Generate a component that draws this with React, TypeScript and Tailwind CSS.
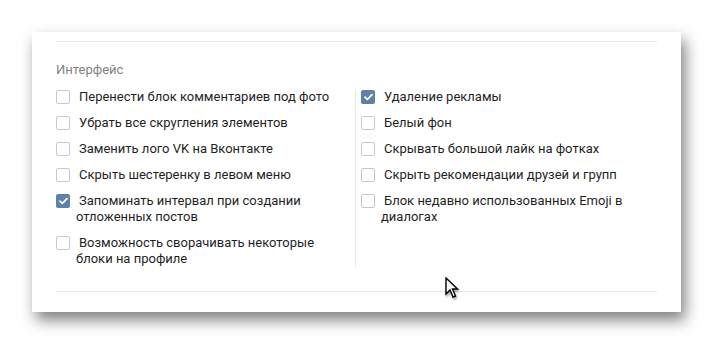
import React from 'react';

type Option = { label: string; checked?: boolean };

const leftOptions: Option[] = [
  { label: 'Перенести блок комментариев под фото' },
  { label: 'Убрать все скругления элементов' },
  { label: 'Заменить лого VK на Вконтакте' },
  { label: 'Скрыть шестеренку в левом меню' },
  { label: 'Запоминать интервал при создании отложенных постов', checked: true },
  { label: 'Возможность сворачивать некоторые блоки на профиле' },
];

const rightOptions: Option[] = [
  { label: 'Удаление рекламы', checked: true },
  { label: 'Белый фон' },
  { label: 'Скрывать большой лайк на фотках' },
  { label: 'Скрыть рекомендации друзей и групп' },
  { label: 'Блок недавно использованных Emoji в диалогах' },
];

const CheckRow: React.FC<{ option: Option }> = ({ option }) => (
  <label className="relative block pl-[20px] indent-[3px] text-[13px] leading-[16px] text-[#1f1f1f]">
    {option.checked ? (
      <span className="absolute left-0 top-[1px] flex h-[14px] w-[14px] items-center justify-center rounded-[2px] bg-[#5e81a8]">
        <svg width="9" height="8" viewBox="0 0 9 8" fill="none">
          <path d="M1 4.2 L3.4 6.4 L8 1.6" stroke="white" strokeWidth="1.8" strokeLinecap="round" strokeLinejoin="round" />
        </svg>
      </span>
    ) : (
      <span className="absolute left-0 top-[1px] h-[14px] w-[14px] rounded-[2px] border border-[#c5c9cf] bg-white" />
    )}
    {option.label}
  </label>
);

const App: React.FC = () => {
  return (
    <div className="relative min-h-[345px] bg-white pl-[32px] pt-[32px]" style={{ fontFamily: 'Roboto, "Noto Sans", sans-serif' }}>
      {/* Settings card */}
      <div className="h-[280px] w-[649px] bg-white px-[24px] pt-[9px] shadow-[4px_8px_14px_rgba(0,0,0,0.5)]">
        <div className="h-px bg-[#e7e8ec]" />
        <div className="mt-[20px] text-[13px] leading-[16px] text-[#828282]">Интерфейс</div>

        <div className="mt-[11px] flex">
          <div className="flex w-[300px] flex-col gap-[10px] border-r border-[#e7e8ec] pr-[8px]">
            {leftOptions.map(o => (
              <CheckRow key={o.label} option={o} />
            ))}
          </div>
          <div className="flex flex-1 flex-col gap-[10px] pl-[5px]">
            {rightOptions.map(o => (
              <CheckRow key={o.label} option={o} />
            ))}
          </div>
        </div>

        <div className="mt-[24px] h-px bg-[#e7e8ec]" />
      </div>

      {/* Mouse cursor */}
      <svg className="absolute left-[445px] top-[277px] drop-shadow-[1px_2px_1px_rgba(0,0,0,0.35)]" width="14" height="22" viewBox="0 0 14 22">
        <path d="M1 1 L1 17 L5 13 L8 20 L10.5 19 L7.5 12 L12.5 12 Z" fill="white" stroke="black" strokeWidth="1.4" strokeLinejoin="miter" />
      </svg>
    </div>
  );
};

export default App;
